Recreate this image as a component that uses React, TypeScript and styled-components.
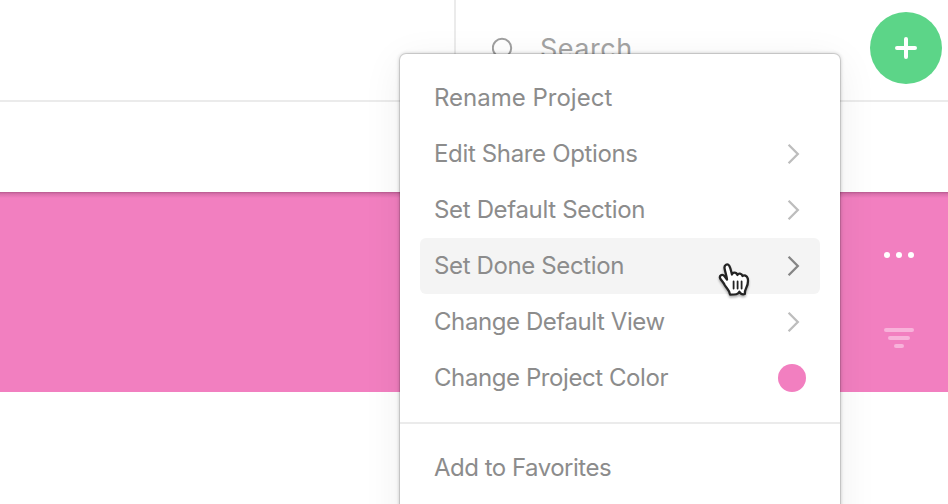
import React from "react";
import styled, { createGlobalStyle } from "styled-components";

const GlobalStyle = createGlobalStyle`
  *, *::before, *::after { box-sizing: border-box; }
  html, body { margin: 0; overflow: hidden; background: #fff; }
  body { font-family: Inter, "Liberation Sans", sans-serif; color: #8c8c8c; }
  svg { display: block; flex: none; }
`;

const Page = styled.div`
  position: relative;
  width: 948px;
  height: 504px;
  overflow: hidden;
  background: #fff;
`;

const Header = styled.header`
  display: flex;
  height: 102px;
  border-bottom: 2px solid #ebebeb;
`;

const HeaderMain = styled.div`
  width: 456px;
  border-right: 2px solid #ebebeb;
`;

const SearchArea = styled.div`
  flex: 1;
  display: flex;
  align-items: center;
  padding: 0 6px 4px 36px;
`;

const SearchLabel = styled.span`
  flex: 1;
  margin-left: 24px;
  padding-top: 1px;
  font-size: 27px;
  line-height: 40px;
  letter-spacing: 0.5px;
  color: #a3a3a3;
`;

const AddButton = styled.button`
  display: grid;
  place-items: center;
  width: 72px;
  height: 72px;
  padding: 0;
  border: 0;
  border-radius: 50%;
  background: #5cd588;
`;

const Toolbar = styled.div`
  height: 90px;
`;

const Banner = styled.section`
  display: flex;
  flex-direction: column;
  align-items: flex-end;
  height: 200px;
  padding: 60px 34px 0 0;
  background: linear-gradient(rgba(70, 20, 50, 0.34), rgba(70, 20, 50, 0.14) 2px, rgba(70, 20, 50, 0) 6px) #f27fc0;
`;

const BannerIcon = styled.div`
  margin-bottom: 70px;
`;

const Menu = styled.nav`
  position: absolute;
  left: 400px;
  top: 54px;
  width: 440px;
  height: 520px;
  padding-top: 16px;
  border-radius: 6px;
  background: #fff;
  box-shadow: 0 0 0 1px rgba(0, 0, 0, 0.1), 0 0 4px rgba(0, 0, 0, 0.28), 0 8px 40px rgba(0, 0, 0, 0.07);
`;

const MenuItem = styled.div<{ $active?: boolean; $tracking: number }>`
  display: flex;
  align-items: center;
  justify-content: space-between;
  height: 56px;
  margin: 0 20px;
  padding: 0 14px;
  border-radius: 6px;
  background: ${(p) => (p.$active ? "#f4f4f4" : "transparent")};
  font-size: 24px;
  line-height: 56px;
  letter-spacing: ${(p) => p.$tracking}px;
  white-space: nowrap;
`;

const ChevronSlot = styled.span`
  margin-right: 6px;
`;

const Swatch = styled.span`
  width: 28px;
  height: 28px;
  border-radius: 50%;
  background: #f27fc0;
`;

const Divider = styled.hr`
  height: 2px;
  margin: 16px 0;
  border: 0;
  background: #ebebeb;
`;

const Pointer = styled.div`
  position: absolute;
  left: 716px;
  top: 260px;
  filter: drop-shadow(0 2px 1px rgba(0, 0, 0, 0.3));
`;

type Entry = { label: string; tracking: number; kind?: "submenu" | "color"; active?: boolean };

const entries: Entry[] = [
  { label: "Rename Project", tracking: 0 },
  { label: "Edit Share Options", tracking: -0.35, kind: "submenu" },
  { label: "Set Default Section", tracking: -0.34, kind: "submenu" },
  { label: "Set Done Section", tracking: -0.37, kind: "submenu", active: true },
  { label: "Change Default View", tracking: -0.42, kind: "submenu" },
  { label: "Change Project Color", tracking: -0.42, kind: "color" },
];

const Chevron = ({ active }: { active?: boolean }) => (
  <ChevronSlot>
    <svg width="14" height="22" viewBox="0 0 14 22" fill="none" stroke={active ? "#858585" : "#bdbdbd"} strokeWidth="2.3">
      <path d="M2.6 1.8 L11.8 11 L2.6 20.2" />
    </svg>
  </ChevronSlot>
);

export default function App() {
  return (
    <Page>
      <GlobalStyle />
      <Header>
        <HeaderMain />
        <SearchArea>
          <svg width="24" height="24" viewBox="0 0 24 24" fill="none" stroke="#a0a0a0" strokeWidth="2">
            <circle cx="10" cy="12" r="9.2" />
            <path d="M16.5 18.5 L22 24" />
          </svg>
          <SearchLabel>Search</SearchLabel>
          <AddButton aria-label="Add">
            <svg width="24" height="24" viewBox="0 0 24 24" stroke="#fff" strokeWidth="4" strokeLinecap="round">
              <path d="M12 3 V21 M3 12 H21" />
            </svg>
          </AddButton>
        </SearchArea>
      </Header>
      <Toolbar />
      <Banner>
        <BannerIcon>
          <svg width="30" height="6" viewBox="0 0 30 6" fill="#fff">
            <circle cx="3" cy="3" r="3" />
            <circle cx="15" cy="3" r="3" />
            <circle cx="27" cy="3" r="3" />
          </svg>
        </BannerIcon>
        <svg width="30" height="20" viewBox="0 0 30 20" fill="#f8b2da">
          <rect width="30" height="4" rx="2" />
          <rect x="4" y="8" width="22" height="4" rx="2" />
          <rect x="10" y="16" width="10" height="4" rx="2" />
        </svg>
      </Banner>
      <Menu>
        {entries.map((e) => (
          <MenuItem key={e.label} $active={e.active} $tracking={e.tracking}>
            {e.label}
            {e.kind === "submenu" && <Chevron active={e.active} />}
            {e.kind === "color" && <Swatch />}
          </MenuItem>
        ))}
        <Divider />
        <MenuItem $tracking={-0.5}>Add to Favorites</MenuItem>
      </Menu>
      <Pointer>
        <svg width="36" height="38" viewBox="0 0 36 38" strokeLinejoin="round" strokeLinecap="round">
          <path
            d="M11 19.5 C10.8 16.5 9.2 12 8.6 8.6 C7.8 4.6 11.6 3 13.4 6 C14.5 8 15.2 11.5 16 14.5 C16.5 12 20.4 12 21.4 15 C22.4 13 25.6 13.2 26.6 16 C28 14.6 31 15.6 31.8 18.6 C32.4 22.5 31.8 25 30.2 28 C29 30.2 28.8 31.8 28.8 34 C26.5 34.8 25 34.4 23.4 31.8 C21.8 34.6 19.8 34.6 14 34.6 C14 30.5 10.8 28.8 8.8 25.2 C7.2 22 5 20.2 4 18 C3.2 15 6.6 13.8 8.6 16.2 Z"
            fill="#fff"
            stroke="#242424"
            strokeWidth="2.3"
          />
          <path d="M17.6 21.5 V28.5 M21.6 21.5 V28.5 M25.6 21.5 V28.5" fill="none" stroke="#242424" strokeWidth="1.8" />
        </svg>
      </Pointer>
    </Page>
  );
}
